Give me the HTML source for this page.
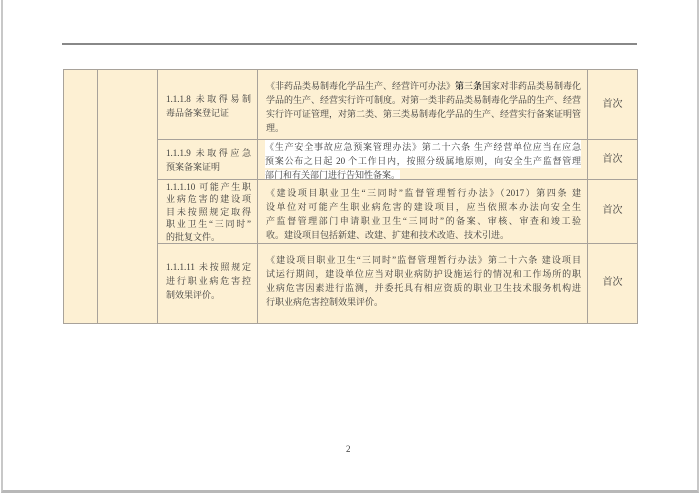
<!DOCTYPE html>
<html><head><meta charset="utf-8"><style>
*{margin:0;padding:0;box-sizing:border-box}
body{width:700px;height:494px;background:#fff;position:relative;overflow:hidden;font-family:"Liberation Serif","Noto Serif CJK SC",serif;color:#3a3a3a}
.frame{position:absolute;left:1px;top:0;width:698px;height:493px;border-left:2px solid #c8c8c8;border-right:2px solid #c8c8c8;border-bottom:3px solid #b8b8b8}
.hr{position:absolute;left:62px;top:43px;width:575px;height:2px;background:#888}
.c{position:absolute;background:#fdf0d3;border:1px solid #a8a29a;font-size:9px;line-height:14px}
.t{position:absolute;left:8px;right:6px}
.t div{text-align:justify;text-align-last:justify;white-space:nowrap;overflow:visible}
.t div.l{text-align-last:left}
.s{position:absolute;width:100%;text-align:center;font-size:10px}
.hl{background:#fff}
.pn{position:absolute;left:346px;top:444px;font-size:9px}
</style></head><body>
<div class="frame"></div>
<div class="hr"></div>

<div class="c" style="left:63px;top:69px;width:35px;height:255px"></div>
<div class="c" style="left:97px;top:69px;width:61px;height:255px"></div>

<div class="c" style="left:157px;top:69px;width:101px;height:71px"><div class="t" style="top:22px"><div>1.1.1.8 未取得易制</div><div class="l">毒品备案登记证</div></div></div>
<div class="c" style="left:257px;top:69px;width:331px;height:71px"><div class="t" style="top:9px"><div>《非药品类易制毒化学品生产、经营许可办法》<b>第三条</b>国家对非药品类易制毒化</div><div>学品的生产、经营实行许可制度。对第一类非药品类易制毒化学品的生产、经营</div><div>实行许可证管理，对第二类、第三类易制毒化学品的生产、经营实行备案证明管</div><div class="l">理。</div></div></div>
<div class="c" style="left:587px;top:69px;width:51px;height:71px"><div class="s" style="top:28px">首次</div></div>

<div class="c" style="left:157px;top:139px;width:101px;height:41px"><div class="t" style="top:6px"><div>1.1.1.9 未取得应急</div><div class="l">预案备案证明</div></div></div>
<div class="c" style="left:257px;top:139px;width:331px;height:41px"><div class="t" style="top:0px;left:7px"><div class="hl">《生产安全事故应急预案管理办法》第二十六条 生产经营单位应当在应急</div><div class="hl">预案公布之日起 20 个工作日内，按照分级属地原则，向安全生产监督管理</div><div class="l"><span class="hl">部门和有关部门进行告知性备案。</span></div></div></div>
<div class="c" style="left:587px;top:139px;width:51px;height:41px"><div class="s" style="top:13px">首次</div></div>

<div class="c" style="left:157px;top:179px;width:101px;height:65px"><div class="t" style="top:1px;line-height:12.4px"><div>1.1.1.10 可能产生职</div><div>业病危害的建设项</div><div>目未按照规定取得</div><div>职业卫生“三同时”</div><div class="l">的批复文件。</div></div></div>
<div class="c" style="left:257px;top:179px;width:331px;height:65px"><div class="t" style="top:6px"><div>《建设项目职业卫生“三同时”监督管理暂行办法》（2017）第四条 建</div><div>设单位对可能产生职业病危害的建设项目，应当依照本办法向安全生</div><div>产监督管理部门申请职业卫生“三同时”的备案、审核、审查和竣工验</div><div class="l">收。建设项目包括新建、改建、扩建和技术改造、技术引进。</div></div></div>
<div class="c" style="left:587px;top:179px;width:51px;height:65px"><div class="s" style="top:24px">首次</div></div>

<div class="c" style="left:157px;top:243px;width:101px;height:81px"><div class="t" style="top:16px"><div>1.1.1.11 未按照规定</div><div>进行职业病危害控</div><div class="l">制效果评价。</div></div></div>
<div class="c" style="left:257px;top:243px;width:331px;height:81px"><div class="t" style="top:9px"><div>《建设项目职业卫生“三同时”监督管理暂行办法》第二十六条 建设项目</div><div>试运行期间，建设单位应当对职业病防护设施运行的情况和工作场所的职</div><div>业病危害因素进行监测，并委托具有相应资质的职业卫生技术服务机构进</div><div class="l">行职业病危害控制效果评价。</div></div></div>
<div class="c" style="left:587px;top:243px;width:51px;height:81px"><div class="s" style="top:32px">首次</div></div>

<div class="pn">2</div>
</body></html>
